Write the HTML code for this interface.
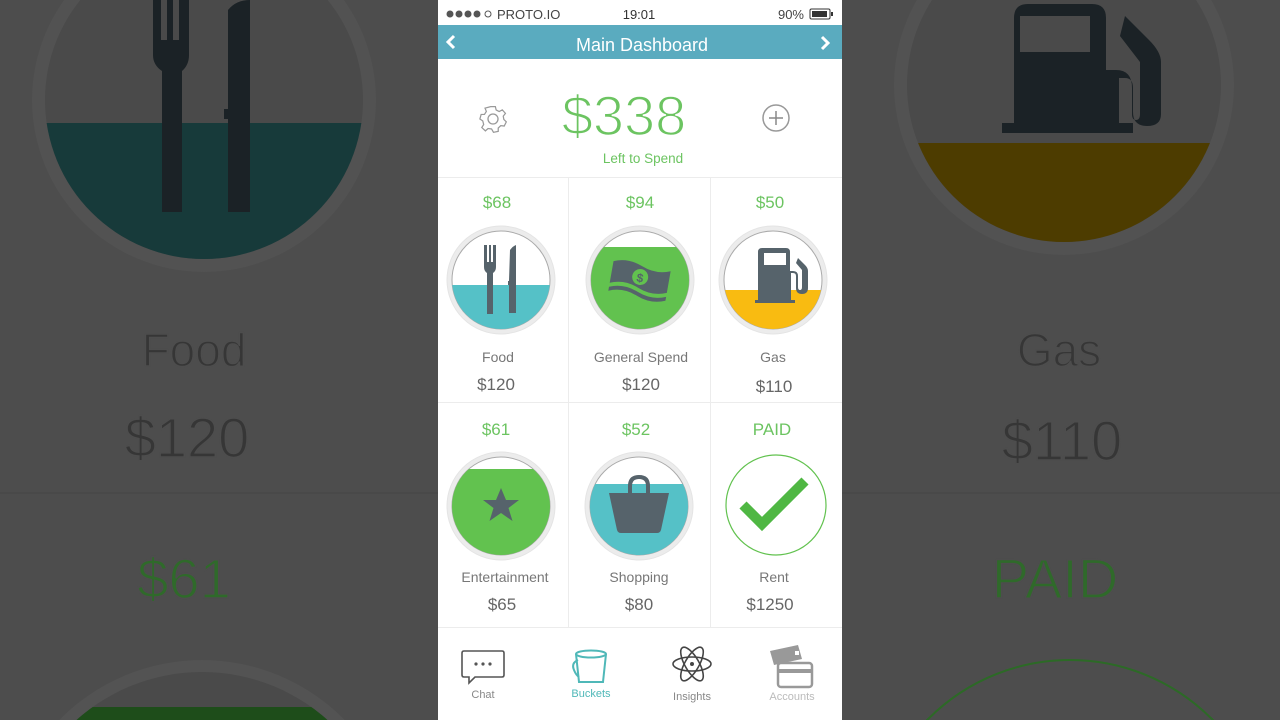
<!DOCTYPE html>
<html><head><meta charset="utf-8"><style>
html,body{margin:0;padding:0;background:#4d4d4d;width:1280px;height:720px;overflow:hidden}
svg{display:block}
text{font-family:"Liberation Sans",sans-serif}
</style></head><body>
<svg width="1280" height="720" viewBox="0 0 1280 720" xmlns="http://www.w3.org/2000/svg">
<rect width="1280" height="720" fill="#4d4d4d"/>
<!-- left background -->
<circle cx="204" cy="100" r="172" fill="#525252"/>
<clipPath id="lc"><circle cx="204" cy="100" r="159"/></clipPath>
<circle cx="204" cy="100" r="159" fill="#4a4a4a"/>
<rect x="0" y="123" width="438" height="200" fill="#173a3a" clip-path="url(#lc)"/>
<path d="M153 0h8v40h6V0h6v40h6V0h10v55q0 10-7 16v141h-20V71q-9-6-9-16z" fill="#1b2226"/>
<path d="M228 10q8-10 22-10v212h-22v-93h-4v-10h4z" fill="#1b2226"/>
<g stroke="#4d4d4d" stroke-width="1.5" paint-order="normal">
<text x="194" y="366" font-size="46" fill="#363636" text-anchor="middle">Food</text>
<text x="187" y="457" font-size="56" fill="#363636" text-anchor="middle">$120</text>
<text x="184" y="598" font-size="56" fill="#2f6a2a" text-anchor="middle">$61</text>
<text x="1059" y="366" font-size="46" fill="#363636" text-anchor="middle">Gas</text>
<text x="1062" y="460" font-size="56" fill="#363636" text-anchor="middle">$110</text>
<text x="1055" y="598" font-size="56" fill="#2f6a2a" text-anchor="middle">PAID</text>
</g>
<line x1="0" y1="493" x2="438" y2="493" stroke="#454545"/>
<clipPath id="lc2"><circle cx="202" cy="860" r="188"/></clipPath>
<circle cx="202" cy="860" r="200" fill="#535353"/>
<circle cx="202" cy="860" r="188" fill="#4a4a4a"/>
<rect x="0" y="707" width="438" height="20" fill="#1e4d1a" clip-path="url(#lc2)"/>
<!-- right background -->
<circle cx="1064" cy="85" r="170" fill="#525252"/>
<clipPath id="rc"><circle cx="1064" cy="85" r="157"/></clipPath>
<circle cx="1064" cy="85" r="157" fill="#4a4a4a"/>
<rect x="842" y="143" width="438" height="200" fill="#4d3c00" clip-path="url(#rc)"/>
<path d="M1014 4h78q14 0 14 14v52h10q16 0 16 18v26q0 6 4 6t4-6V62l-20-26 5-20 24 24q12 12 12 22v52q0 12-14 12t-14-14V88q0-10-8-10h-6v45h14v10h-131v-10h12V18q0-14 14-14zm6 12v36h70V16z" fill="#1b2226" fill-rule="evenodd"/>
<line x1="842" y1="493" x2="1280" y2="493" stroke="#454545"/>
<circle cx="1070" cy="860" r="200" fill="none" stroke="#2c6a26" stroke-width="2"/>

<!-- phone -->
<rect x="438" y="0" width="404" height="720" fill="#fff"/>
<g fill="#555"><circle cx="450" cy="14" r="3.5"/><circle cx="459" cy="14" r="3.5"/><circle cx="468" cy="14" r="3.5"/><circle cx="477" cy="14" r="3.5"/></g>
<circle cx="488" cy="14" r="3" fill="none" stroke="#555"/>
<text x="497" y="19" font-size="13" fill="#444">PROTO.IO</text>
<text x="639" y="19" font-size="13" fill="#333" text-anchor="middle">19:01</text>
<text x="804" y="19" font-size="13" fill="#444" text-anchor="end">90%</text>
<rect x="810" y="9" width="20" height="10" rx="1.5" fill="none" stroke="#333"/>
<rect x="812" y="11" width="15" height="6" fill="#333"/><rect x="831" y="12" width="2" height="4" fill="#333"/>
<rect x="438" y="25" width="404" height="34" fill="#5aabbf"/>
<path d="M454 36l-6 6 6 6" fill="none" stroke="#fff" stroke-width="3"/>
<path d="M822 37l6 6-6 6" fill="none" stroke="#fff" stroke-width="3"/>
<text x="642" y="51" font-size="18" fill="#fff" text-anchor="middle">Main Dashboard</text>
<!-- gear -->
<g transform="translate(493,119)" fill="none" stroke="#999" stroke-width="1.3">
<path d="M-2.5,-13 L2.5,-13 L3.3,-9.5 L6.5,-7.8 L9.8,-9.6 L13.1,-5.9 L10.8,-3 L11.4,0.5 L14,3 L11.8,7.4 L8.2,7 L5.5,9.5 L5.5,13 L0.5,14 L-1.5,10.5 L-5.2,10 L-8,12.5 L-11.8,9 L-9.8,5.8 L-10.8,2 L-13.8,0 L-12.5,-4.8 L-9,-4.8 L-7,-8 L-8.4,-11.4 Z" transform="scale(0.95)"/>
<circle r="5"/></g>
<text x="624" y="135" font-size="56" fill="#6cc461" text-anchor="middle" stroke="#fff" stroke-width="1.6">$338</text>
<circle cx="776" cy="118" r="13" fill="none" stroke="#999" stroke-width="1.5"/>
<path d="M776 111v14M769 118h14" stroke="#888" stroke-width="1.5"/>
<text x="643" y="163" font-size="13.5" fill="#6cc461" text-anchor="middle">Left to Spend</text>
<g stroke="#ececec"><line x1="438" y1="177.5" x2="842" y2="177.5"/><line x1="438" y1="402.5" x2="842" y2="402.5"/><line x1="438" y1="627.5" x2="842" y2="627.5"/><line x1="568.5" y1="178" x2="568.5" y2="627"/><line x1="710.5" y1="178" x2="710.5" y2="627"/></g>
<g font-size="17" fill="#6cc461" text-anchor="middle">
<text x="497" y="208">$68</text><text x="640" y="208">$94</text><text x="770" y="208">$50</text>
<text x="496" y="435">$61</text><text x="636" y="435">$52</text><text x="772" y="435">PAID</text></g>
<g font-size="14" fill="#777" text-anchor="middle">
<text x="498" y="362">Food</text><text x="641" y="362">General Spend</text><text x="773" y="362">Gas</text>
<text x="505" y="582">Entertainment</text><text x="639" y="582">Shopping</text><text x="774" y="582">Rent</text></g>
<g font-size="17" fill="#666" text-anchor="middle">
<text x="496" y="390">$120</text><text x="641" y="390">$120</text><text x="774" y="392">$110</text>
<text x="502" y="610">$65</text><text x="639" y="610">$80</text><text x="770" y="610">$1250</text></g>
<defs>
<clipPath id="c1"><circle cx="501" cy="280" r="49"/></clipPath>
<clipPath id="c2"><circle cx="640" cy="280" r="49"/></clipPath>
<clipPath id="c3"><circle cx="773" cy="280" r="49"/></clipPath>
<clipPath id="c4"><circle cx="501" cy="506" r="49"/></clipPath>
<clipPath id="c5"><circle cx="639" cy="506" r="49"/></clipPath>
</defs>
<g fill="#ececec" stroke="#e4e4e4"><circle cx="501" cy="280" r="54"/><circle cx="640" cy="280" r="54"/><circle cx="773" cy="280" r="54"/><circle cx="501" cy="506" r="54"/><circle cx="639" cy="506" r="54"/></g>
<g fill="#fff" stroke="#aaa" stroke-width="1"><circle cx="501" cy="280" r="49"/><circle cx="640" cy="280" r="49"/><circle cx="773" cy="280" r="49"/><circle cx="501" cy="506" r="49"/><circle cx="639" cy="506" r="49"/></g>
<rect x="440" y="285" width="120" height="60" fill="#55c1c7" clip-path="url(#c1)"/>
<rect x="580" y="247" width="120" height="90" fill="#62c24f" clip-path="url(#c2)"/>
<rect x="710" y="290" width="120" height="50" fill="#f9bb11" clip-path="url(#c3)"/>
<rect x="440" y="469" width="120" height="90" fill="#62c24f" clip-path="url(#c4)"/>
<rect x="580" y="484" width="120" height="80" fill="#55c1c7" clip-path="url(#c5)"/>
<!-- fork & knife -->
<path d="M484 245h3v17h2v-17h2v17h2v-17h3v22q0 4-3 6v41h-6v-41q-3-2-3-6z" fill="#56636b"/>
<path d="M510 250q3-4 6-5v68h-7v-28h-1v-4h1z" fill="#56636b"/>
<!-- money -->
<g transform="translate(640,278) rotate(10)" fill="#56636b"><path d="M-29 -12q14 -6 29 0q15 6 29 0v22q-14 6 -29 0q-15 -6 -29 0z"/><path d="M-29 14q14 -6 29 0q15 6 29 0v4q-14 6 -29 0q-15 -6 -29 0z"/><circle cx="0" cy="-1" r="8" fill="#62c24f"/><text x="0" y="4" font-size="12" fill="#56636b" text-anchor="middle" font-weight="bold">$</text></g>
<!-- gas pump -->
<path d="M762 248h24q4 0 4 4v19h3q5 0 5 5v11q0 3 2 3t2-3v-17l-6-7 2-5 7 7q3 3 3 6v17q0 6-6 6t-6-6v-12q0-3-3-3h-2v27h4v3h-40v-3h3v-48q0-4 4-4zm2 5v12h22v-12z" fill="#56636b" fill-rule="evenodd"/>
<!-- star -->
<path d="M501 488l5 12h13l-10.5 8 4 13-11.5-8-11.5 8 4-13-10.5-8h13z" fill="#56636b"/>
<!-- bag -->
<path d="M630 493v-7q0-9 9-9t9 9v7" fill="none" stroke="#56636b" stroke-width="4"/>
<path d="M609 493h60l-8 37q-1 3-4 3h-36q-3 0-4-3z" fill="#56636b"/>
<!-- rent -->
<circle cx="776" cy="505" r="50" fill="#fff" stroke="#62c24f" stroke-width="1.2"/>
<path d="M743 505l19 19 43-43" fill="none" stroke="#4fb743" stroke-width="10"/>
<!-- tab bar -->
<path d="M464 651h38q2 0 2 2v22q0 2-2 2h-27l-6 6v-6h-5q-2 0-2-2v-22q0-2 2-2z" fill="none" stroke="#555" stroke-width="1.6"/>
<g fill="#555"><circle cx="476" cy="664" r="1.6"/><circle cx="483" cy="664" r="1.6"/><circle cx="490" cy="664" r="1.6"/></g>
<text x="483" y="698" font-size="11" fill="#888" text-anchor="middle">Chat</text>
<g fill="none" stroke="#4fb8b8" stroke-width="2"><ellipse cx="591" cy="654" rx="15" ry="3.5"/><path d="M576 654l3 28h24l3-28"/><path d="M578 660q-7 3-4 10q2 5 5 7"/></g>
<text x="591" y="697" font-size="11" fill="#4fb8b8" text-anchor="middle">Buckets</text>
<g fill="none" stroke="#444" stroke-width="1.6"><ellipse cx="692" cy="664" rx="19" ry="7"/><ellipse cx="692" cy="664" rx="19" ry="7" transform="rotate(60 692 664)"/><ellipse cx="692" cy="664" rx="19" ry="7" transform="rotate(-60 692 664)"/></g>
<circle cx="692" cy="664" r="2" fill="#444"/>
<text x="692" y="700" font-size="11" fill="#888" text-anchor="middle">Insights</text>
<path d="M770 651l28-6 4 14-28 6z" fill="#999"/><rect x="795" y="651" width="4" height="4" fill="#fff"/>
<rect x="778" y="663" width="34" height="24" rx="3" fill="#fff" stroke="#999" stroke-width="2.5"/>
<rect x="778" y="669" width="34" height="4" fill="#999"/>
<text x="792" y="700" font-size="11" fill="#bbb" text-anchor="middle">Accounts</text>
</svg>
</body></html>
